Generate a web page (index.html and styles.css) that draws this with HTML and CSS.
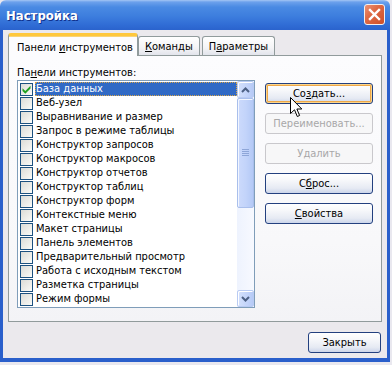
FILE: index.html
```html
<!DOCTYPE html>
<html lang="ru">
<head>
<meta charset="utf-8">
<title>Настройка</title>
<link rel="stylesheet" href="styles.css">
</head>
<body>
<div class="window">
  <div class="titlebar">
    <span class="title">Настройка</span>
    <span class="close"><svg width="21" height="21" viewBox="0 0 21 21"><path d="M6 6 L15 15 M15 6 L6 15" stroke="#fff" stroke-width="2.4" stroke-linecap="square"/></svg></span>
  </div>
  <div class="frame">
    <div class="tabs">
      <div class="tab active">Панели <u>и</u>нструментов</div>
      <div class="tab"><u>К</u>оманды</div>
      <div class="tab gap">П<u>а</u>раметры</div>
    </div>
    <div class="panel">
      <div class="label">Па<u>н</u>ели инструментов:</div>
      <div class="content">
        <div class="list">
          <div class="rows">
            <div class="row sel"><span class="cb"><svg width="11" height="11" viewBox="0 0 11 11"><path d="M1.5 4.2 L4.3 7 L9.5 1.8 L9.5 4.6 L4.3 9.8 L1.5 7 Z" fill="#21A121"/></svg></span><span class="txt">База данных</span></div>
            <div class="row"><span class="cb"></span><span class="txt">Веб-узел</span></div>
            <div class="row"><span class="cb"></span><span class="txt">Выравнивание и размер</span></div>
            <div class="row"><span class="cb"></span><span class="txt">Запрос в режиме таблицы</span></div>
            <div class="row"><span class="cb"></span><span class="txt">Конструктор запросов</span></div>
            <div class="row"><span class="cb"></span><span class="txt">Конструктор макросов</span></div>
            <div class="row"><span class="cb"></span><span class="txt">Конструктор отчетов</span></div>
            <div class="row"><span class="cb"></span><span class="txt">Конструктор таблиц</span></div>
            <div class="row"><span class="cb"></span><span class="txt">Конструктор форм</span></div>
            <div class="row"><span class="cb"></span><span class="txt">Контекстные меню</span></div>
            <div class="row"><span class="cb"></span><span class="txt">Макет страницы</span></div>
            <div class="row"><span class="cb"></span><span class="txt">Панель элементов</span></div>
            <div class="row"><span class="cb"></span><span class="txt">Предварительный просмотр</span></div>
            <div class="row"><span class="cb"></span><span class="txt">Работа с исходным текстом</span></div>
            <div class="row"><span class="cb"></span><span class="txt">Разметка страницы</span></div>
            <div class="row"><span class="cb"></span><span class="txt">Режим формы</span></div>
          </div>
          <div class="scroll">
            <div class="sbtn"><svg width="9" height="6" viewBox="0 0 9 6"><path d="M1 5 L4.5 1.5 L8 5" fill="none" stroke="#4D6185" stroke-width="2"/></svg></div>
            <div class="thumb"><svg width="7" height="8" viewBox="0 0 7 8"><path d="M0 0.5H7M0 2.5H7M0 4.5H7M0 6.5H7" stroke="#8EA6D8" stroke-width="1"/></svg></div>
            <div class="track"></div>
            <div class="sbtn"><svg width="9" height="6" viewBox="0 0 9 6"><path d="M1 1 L4.5 4.5 L8 1" fill="none" stroke="#4D6185" stroke-width="2"/></svg></div>
          </div>
        </div>
        <div class="buttons">
          <div class="btn default">Со<u>з</u>дать...</div>
          <div class="btn disabled">Переименовать...</div>
          <div class="btn disabled">Удалить</div>
          <div class="btn">С<u>б</u>рос...</div>
          <div class="btn"><u>С</u>войства</div>
        </div>
      </div>
    </div>
    <div class="footer">
      <div class="btn close-btn">Закрыть</div>
    </div>
  </div>
  <svg class="cursor" width="13" height="21" viewBox="0 0 13 21"><path d="M0.5 0.5 L0.5 16.5 L4.5 12.8 L7.3 19.5 L9.6 18.5 L6.9 12 L11.8 12 Z" fill="#fff" stroke="#000" stroke-width="1" stroke-linejoin="miter"/></svg>
</div>
</body>
</html>
```

FILE: styles.css
```css
html, body {
  margin: 0;
  padding: 0;
}
body {
  background: #E9E8EF;
  font-family: "DejaVu Sans Condensed", "DejaVu Sans", sans-serif;
  font-size: 11px;
  color: #000;
}
u {
  text-decoration: underline;
  text-underline-offset: 1px;
}
.window {
  position: relative;
  width: 390px;
  height: 362px;
}
.titlebar {
  height: 30px;
  border-radius: 6px 6px 0 0;
  background: linear-gradient(to bottom, #A4C6F4 0px, #6CA1EC 2px, #4A8AE3 7px, #3D7EDE 16px, #316ED6 24px, #2A63CD 30px);
  display: flex;
  align-items: center;
  justify-content: space-between;
  padding: 0 5px 0 6px;
  box-sizing: border-box;
}
.title {
  font-family: "DejaVu Sans Condensed", "DejaVu Sans", sans-serif;
  font-weight: bold;
  font-size: 13px;
  color: #fff;
  text-shadow: 1px 1px 0 #10318C;
  margin-top: 1px;
}
.close {
  width: 21px;
  height: 21px;
  box-sizing: border-box;
  border: 1px solid #F4F0F0;
  border-radius: 3px;
  background: linear-gradient(135deg, #EC9275 0%, #DE6A45 40%, #CF4F28 100%);
  display: flex;
  margin-top: -2px;
}
.close svg {
  margin: -1px;
}
.frame {
  height: 332px;
  box-sizing: border-box;
  border-left: 3px solid #2A5FCB;
  border-right: 3px solid #2A5FCB;
  border-bottom: 4px solid #2A5FCB;
  background: #EBE9ED;
  display: flex;
  flex-direction: column;
}
.tabs {
  display: flex;
  align-items: flex-end;
  height: 23px;
  margin-top: 3px;
  padding-left: 5px;
  margin-bottom: -1px;
  position: relative;
  z-index: 1;
}
.tab {
  height: 19px;
  box-sizing: border-box;
  margin-bottom: 1px;
  border: 1px solid #919B9C;
  border-bottom: none;
  border-radius: 3px 3px 0 0;
  background: linear-gradient(to bottom, #FFFFFF, #F4F4F6 60%, #E2E4EC);
  padding: 3px 6px 0 6px;
  line-height: 13px;
  white-space: nowrap;
}
.tab.gap {
  margin-left: 2px;
}
.tab.active {
  height: 23px;
  margin-bottom: 0;
  width: 130px;
  border-top: 3px solid #FFC83C;
  box-shadow: inset 0 1px 0 #F8D478;
  border-radius: 3px 3px 0 0;
  background: #FCFCFE;
  padding: 5px 0 0 8px;
}
.panel {
  margin: 0 5px 0 5px;
  height: 267px;
  box-sizing: border-box;
  border: 1px solid #919B9C;
  background: linear-gradient(to bottom, #FCFCFE, #F8F8FA 70%, #F3F3F6);
  padding: 10px 8px 13px 8px;
}
.label {
  height: 13px;
  line-height: 13px;
  margin-bottom: 1px;
}
.content {
  display: flex;
  gap: 10px;
}
.list {
  width: 238px;
  height: 228px;
  box-sizing: border-box;
  border: 1px solid #7F9DB9;
  background: #fff;
  display: flex;
}
.rows {
  flex: 1;
  padding-top: 1px;
}
.row {
  height: 14px;
  display: flex;
  align-items: center;
  padding-left: 2px;
}
.cb {
  width: 13px;
  height: 13px;
  box-sizing: border-box;
  border: 1px solid #1C5180;
  background: linear-gradient(135deg, #DCDCD7, #F4F4F0 80%, #FFFFFF);
  margin-right: 2px;
  display: flex;
  align-items: center;
  justify-content: center;
  flex: none;
}
.txt {
  line-height: 13px;
  height: 14px;
  box-sizing: border-box;
  padding: 0 2px 0 1px;
  white-space: nowrap;
}
.row.sel .txt {
  flex: 1;
  background: #316AC5;
  color: #fff;
  outline: 1px dotted #D9A64A;
  outline-offset: -1px;
}
.scroll {
  width: 17px;
  display: flex;
  flex-direction: column;
  background: linear-gradient(to right, #EEF3FE, #F7F9FF);
}
.sbtn {
  height: 17px;
  box-sizing: border-box;
  border: 1px solid #B9CBF3;
  border-radius: 2px;
  background: linear-gradient(to right, #D4E1FC, #C3D4FA 60%, #B6CAF6);
  box-shadow: inset 1px 1px 0 #FFFFFF;
  display: flex;
  align-items: center;
  justify-content: center;
}
.thumb {
  height: 110px;
  box-sizing: border-box;
  border: 1px solid #A9BFEC;
  border-radius: 2px;
  background: linear-gradient(to right, #CCDAFC, #C3D4FA 50%, #B4C9F6);
  box-shadow: inset 1px 1px 0 #F2F6FF;
  display: flex;
  align-items: center;
  justify-content: center;
}
.track {
  flex: 1;
}
.buttons {
  width: 108px;
  padding-top: 3px;
  display: flex;
  flex-direction: column;
  gap: 9px;
}
.btn {
  height: 21px;
  box-sizing: border-box;
  border: 1px solid #23407F;
  border-radius: 3px;
  background: linear-gradient(to bottom, #FFFFFF 0%, #F6F7FA 35%, #E6EAF3 75%, #CCD5EA 100%);
  display: flex;
  align-items: center;
  justify-content: center;
  line-height: 13px;
  white-space: nowrap;
}
.btn.default {
  box-shadow: inset 0 0 0 1px #FCD68E, inset 0 0 0 2px #EEA848;
}
.btn.disabled {
  border-color: #C9C8CC;
  background: #F7F7F8;
  color: #A8A7A8;
}
.footer {
  display: flex;
  justify-content: flex-end;
  padding: 10px 6px 0 0;
}
.close-btn {
  width: 73px;
}
.cursor {
  position: absolute;
  left: 290px;
  top: 97px;
}
```
